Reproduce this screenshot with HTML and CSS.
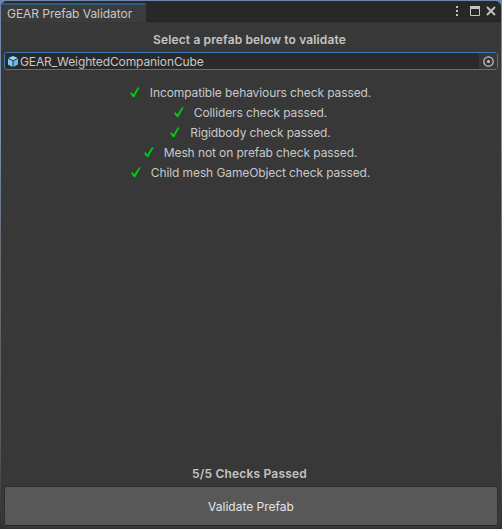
FILE: index.html
```html
<!DOCTYPE html>
<html lang="en">
<head>
<meta charset="utf-8">
<title>GEAR Prefab Validator</title>
<link rel="stylesheet" href="styles.css">
</head>
<body>
<main class="window">
  <header class="titlebar">
    <div class="tab">GEAR Prefab Validator</div>
    <div class="controls">
      <svg width="4" height="12" viewBox="0 0 4 12" fill="#c4c4c4"><path d="M1 1h2v2H1zM1 5h2v2H1zM1 9h2v2H1z"/></svg>
      <svg width="10" height="10" viewBox="0 0 10 10"><path d="M.5.5h9v9h-9z" fill="none" stroke="#c4c4c4"/><path d="M0 0h10v3H0z" fill="#c4c4c4"/></svg>
      <svg width="10" height="10" viewBox="0 0 10 10"><path d="M1 1l8 8M9 1L1 9" stroke="#c4c4c4" stroke-width="1.900"/></svg>
    </div>
  </header>
  <h1 class="heading">Select a prefab below to validate</h1>
  <div class="field">
    <svg class="cube" width="10" height="11" viewBox="0 0 10 11"><path d="M5 0l4.700 2L5 4.200.3 2z" fill="#8fdcff"/><path d="M0 2.700l4.500 2.200V11L0 8.600z" fill="#79cef5"/><path d="M10 2.700L5.500 4.900V11L10 8.600z" fill="#62bce8"/></svg>
    <span class="value">GEAR_WeightedCompanionCube</span>
    <span class="picker"><svg width="11" height="11" viewBox="0 0 11 11"><circle cx="5.500" cy="5.500" r="4.700" fill="none" stroke="#c4c4c4" stroke-width="1.200"/><circle cx="5.500" cy="5.500" r="1.500" fill="#c4c4c4"/></svg></span>
  </div>
  <ul class="checks">
    <li><svg class="tick" viewBox="0 0 10 11"><path d="M0 6.200l1.700-.9 1.600 2.300L7.800.6 9.700.4 4.200 10.200H3z"/></svg><span>Incompatible behaviours check passed.</span></li>
    <li><svg class="tick" viewBox="0 0 10 11"><path d="M0 6.200l1.700-.9 1.600 2.300L7.800.6 9.700.4 4.200 10.200H3z"/></svg><span>Colliders check passed.</span></li>
    <li><svg class="tick" viewBox="0 0 10 11"><path d="M0 6.200l1.700-.9 1.600 2.300L7.800.6 9.700.4 4.200 10.200H3z"/></svg><span>Rigidbody check passed.</span></li>
    <li><svg class="tick" viewBox="0 0 10 11"><path d="M0 6.200l1.700-.9 1.600 2.300L7.800.6 9.700.4 4.200 10.200H3z"/></svg><span>Mesh not on prefab check passed.</span></li>
    <li><svg class="tick" viewBox="0 0 10 11"><path d="M0 6.200l1.700-.9 1.600 2.300L7.800.6 9.700.4 4.200 10.200H3z"/></svg><span>Child mesh GameObject check passed.</span></li>
  </ul>
  <p class="summary">5/5 Checks Passed</p>
  <button class="validate">Validate Prefab</button>
</main>
</body>
</html>
```
FILE: styles.css
```css
* { box-sizing: border-box; margin: 0; padding: 0; }
body {
  width: 502px; height: 529px; overflow: hidden; padding: 1px;
  background: linear-gradient(#6f87ad 0, #7a91ae 25%, #68717a 45%, #5a5754 85%, #302d2c 100%);
  font: 12px/16px Inter, "Liberation Sans", sans-serif; color: #c8c8c8;
}
svg { display: block; flex: none; }
.window {
  height: 527px; display: flex; flex-direction: column;
  background: #383838; border-radius: 6px; overflow: hidden;
}
.titlebar {
  height: 21px; flex: none; display: flex; justify-content: space-between;
  background: #282828; border-bottom: 1px solid #232323; padding-top: 2px;
}
.tab {
  width: 145px; height: 19px; padding: 1px 0 0 6px; white-space: nowrap; letter-spacing: -.04px;
  background: #3c3c3c; border-top: 2px solid #2c5d87; border-radius: 2px 2px 0 0;
}
.controls { display: flex; align-items: center; gap: 11px; padding: 0 5px 2px 0; }
.controls svg:last-child { margin-left: -5px; }
.heading {
  height: 18px; margin-top: 9px; padding-right: 3px; font-size: 12px; line-height: 18px;
  letter-spacing: .14px; font-weight: 600; text-align: center; color: #c4c4c4;
}
.field {
  height: 18px; margin: 3px 3px 0; display: flex; align-items: center;
  background: #2a2a2a; border: 1px solid #3a79bb; border-radius: 3px; flex: none;
}
.cube { margin: 1px 2px 0 3px; }
.value { flex: 1; white-space: nowrap; letter-spacing: -.11px; padding-top: 1px; }
.picker {
  width: 18px; height: 16px; display: flex; align-items: center;
  justify-content: center; background: #373737;
}
.checks { list-style: none; margin-top: 13px; padding-right: 1px; flex: 1; letter-spacing: -.1px; }
.checks li {
  height: 20px; display: flex; justify-content: center; align-items: center;
  gap: 10px; white-space: nowrap;
}
.tick { width: 10px; height: 11px; fill: #00cb0c; margin-top: -1px; }
.summary {
  height: 16px; padding-right: 3px; font-weight: 600; text-align: center; margin-bottom: 4px;
  letter-spacing: .19px; color: #c4c4c4;
}
.validate {
  height: 40px; flex: none; margin: 0 3px 2px; border: 1px solid #303030; border-bottom-color: #242424;
  border-radius: 3px; background: #585858; color: #e4e4e4; font: inherit; padding-top: 1px;
}
```
